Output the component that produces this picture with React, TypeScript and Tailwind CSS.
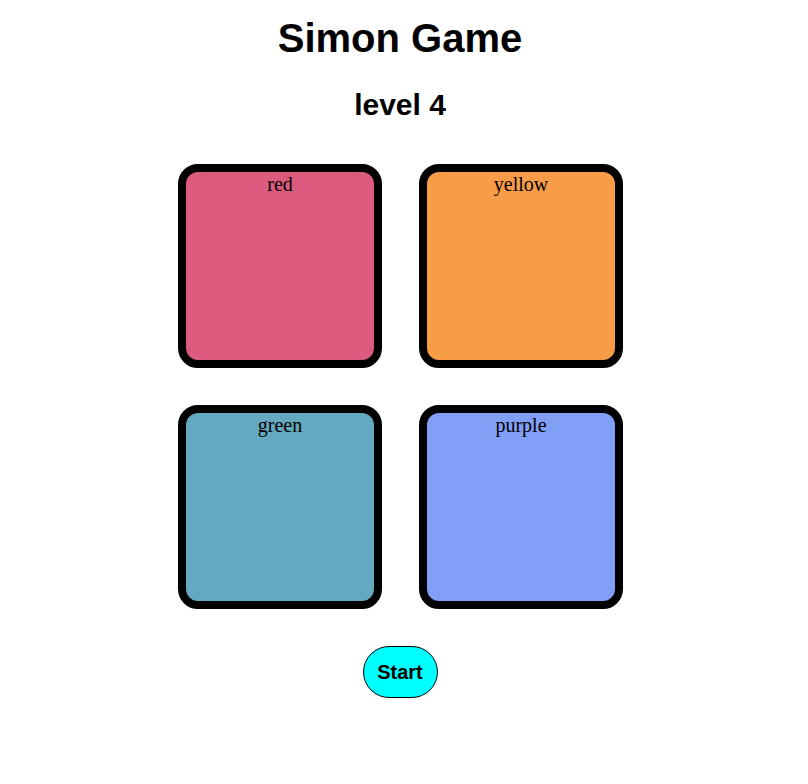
import React from "react";

const boxes = [
  { label: "red", cls: "bg-[#db5a7e]" },
  { label: "yellow", cls: "bg-[#f89c47]" },
  { label: "green", cls: "bg-[#64a9bf]" },
  { label: "purple", cls: "bg-[#829ff8]" },
];

export default function App() {
  return (
    <div className="w-[800px] bg-white flex flex-col items-center font-['Liberation_Sans',Arial,sans-serif] text-black">
      <h1 className="mt-[15px] text-[40px] leading-[46px] font-bold">Simon Game</h1>
      <h2 className="mt-[26px] text-[30px] leading-[35px] font-bold">level 4</h2>
      <div className="mt-[42px] grid grid-cols-[204px_204px] gap-[37px] ml-[1px]">
        {boxes.map((b) => (
          <div
            key={b.label}
            className={`w-[204px] h-[204px] border-8 border-black rounded-[20px] ${b.cls} pt-[1px] text-center font-['Liberation_Serif','Times_New_Roman',serif] text-[20px] leading-[23px] font-normal`}
          >
            {b.label}
          </div>
        ))}
      </div>
      <button className="mt-[37px] w-[75px] h-[52px] bg-[#00ffff] border border-black rounded-full text-[20px] font-bold leading-[23px]">
        Start
      </button>
    </div>
  );
}
